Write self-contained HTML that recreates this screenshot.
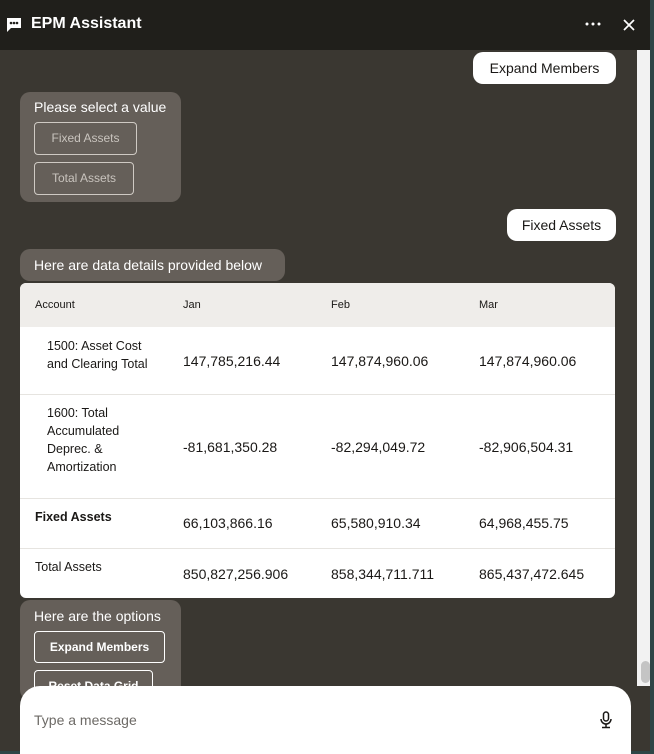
<!DOCTYPE html>
<html><head><meta charset="utf-8"><style>
*{box-sizing:border-box;margin:0;padding:0}
body{width:654px;height:754px;overflow:hidden;background:#3a3731;font-family:"Liberation Sans",sans-serif;position:relative}
.a{position:absolute}
.hdr{left:0;top:0;width:654px;height:50px;background:#201f1b}
.white{background:#fff;color:#1a1816;border-radius:10px;font-size:14px}
.bub{background:#655f59;border-radius:10px}
.btn{border:1px solid #cfcac4;border-radius:4px;font-size:12px;text-align:center;color:#c9c4be}
.t{font-size:14px;color:#1a1816}
.h{font-size:11px;color:#1a1816}
.ln{left:20px;width:595px;height:1px;background:#e6e4e0}
</style></head><body>
<div class="a hdr"></div>
<svg class="a" style="left:6px;top:17px" width="16" height="16" viewBox="0 0 16 16"><path d="M1 1h14v10H5l-4 4z" fill="#fff"/><circle cx="5" cy="6" r="1.3" fill="#201f1b"/><circle cx="8" cy="6" r="1.3" fill="#201f1b"/><circle cx="11" cy="6" r="1.3" fill="#201f1b"/></svg>
<div class="a" style="left:31px;top:15px;color:#fff;font-weight:bold;font-size:16px">EPM Assistant</div>
<svg class="a" style="left:585px;top:22px" width="16" height="4" viewBox="0 0 16 4"><circle cx="2" cy="2" r="1.5" fill="#fff"/><circle cx="8" cy="2" r="1.5" fill="#fff"/><circle cx="14" cy="2" r="1.5" fill="#fff"/></svg>
<svg class="a" style="left:623px;top:19px" width="12" height="12" viewBox="0 0 12 12"><path d="M1 1L11 11M11 1L1 11" stroke="#fff" stroke-width="1.7"/></svg>
<div class="a" style="left:637px;top:50px;width:13px;height:636px;background:#f2f2f2"></div>
<div class="a" style="left:641px;top:661px;width:9px;height:22px;background:#c4c4c4;border-radius:5px"></div>
<div class="a" style="left:650px;top:0;width:4px;height:754px;background:#2e4647"></div>
<div class="a" style="left:0;top:751px;width:654px;height:3px;background:#2e4647"></div>

<div class="a white" style="left:473px;top:52px;width:143px;height:32px;line-height:32px;text-align:center">Expand Members</div>
<div class="a bub" style="left:20px;top:92px;width:161px;height:110px"></div>
<div class="a" style="left:34px;top:99px;color:#fff;font-size:14px">Please select a value</div>
<div class="a btn" style="left:34px;top:122px;width:103px;height:33px;line-height:31px">Fixed Assets</div>
<div class="a btn" style="left:34px;top:162px;width:100px;height:33px;line-height:31px">Total Assets</div>
<div class="a white" style="left:507px;top:209px;width:109px;height:32px;line-height:32px;text-align:center">Fixed Assets</div>
<div class="a bub" style="left:20px;top:249px;width:265px;height:32px;line-height:32px;padding-left:14px;color:#fff;font-size:14px">Here are data details provided below</div>

<div class="a" style="left:20px;top:283px;width:595px;height:315px;background:#fff;border-radius:6px;overflow:hidden">
<div style="height:44px;background:#efedea"></div></div>
<div class="a h" style="left:35px;top:299px">Account</div>
<div class="a h" style="left:183px;top:299px">Jan</div>
<div class="a h" style="left:331px;top:299px">Feb</div>
<div class="a h" style="left:479px;top:299px">Mar</div>
<div class="a ln" style="top:394px"></div>
<div class="a ln" style="top:498px"></div>
<div class="a ln" style="top:548px"></div>
<div class="a" style="left:47px;top:337px;font-size:12.5px;line-height:18px;color:#1a1816">1500: Asset Cost<br>and Clearing Total</div>
<div class="a t" style="left:183px;top:353px">147,785,216.44</div>
<div class="a t" style="left:331px;top:353px">147,874,960.06</div>
<div class="a t" style="left:479px;top:353px">147,874,960.06</div>
<div class="a" style="left:47px;top:404px;font-size:12.5px;line-height:18px;color:#1a1816">1600: Total<br>Accumulated<br>Deprec. &amp;<br>Amortization</div>
<div class="a t" style="left:183px;top:439px">-81,681,350.28</div>
<div class="a t" style="left:331px;top:439px">-82,294,049.72</div>
<div class="a t" style="left:479px;top:439px">-82,906,504.31</div>
<div class="a" style="left:35px;top:510px;font-size:12.5px;font-weight:bold;color:#1a1816">Fixed Assets</div>
<div class="a t" style="left:183px;top:515px">66,103,866.16</div>
<div class="a t" style="left:331px;top:515px">65,580,910.34</div>
<div class="a t" style="left:479px;top:515px">64,968,455.75</div>
<div class="a" style="left:35px;top:560px;font-size:12.5px;color:#1a1816">Total Assets</div>
<div class="a t" style="left:183px;top:566px">850,827,256.906</div>
<div class="a t" style="left:331px;top:566px">858,344,711.711</div>
<div class="a t" style="left:479px;top:566px">865,437,472.645</div>

<div class="a bub" style="left:20px;top:600px;width:161px;height:100px"></div>
<div class="a" style="left:34px;top:608px;color:#fff;font-size:14px">Here are the options</div>
<div class="a btn" style="left:34px;top:631px;width:131px;height:32px;line-height:30px;color:#fff;border-color:#fff;font-weight:bold">Expand Members</div>
<div class="a btn" style="left:34px;top:670px;width:119px;height:32px;line-height:30px;color:#fff;border-color:#fff;font-weight:bold">Reset Data Grid</div>

<div class="a" style="left:20px;top:686px;width:611px;height:68px;background:#fff;border-radius:20px 20px 0 0"></div>
<div class="a" style="left:34px;top:712px;font-size:14px;color:#6d6a66">Type a message</div>
<svg class="a" style="left:599px;top:711px" width="14" height="18" viewBox="0 0 14 18"><rect x="4.5" y="1" width="5" height="9" rx="2.5" fill="none" stroke="#1a1816" stroke-width="1.5"/><path d="M2 8a5 5 0 0 0 10 0M7 13v3M3 16.5h8" fill="none" stroke="#1a1816" stroke-width="1.5"/></svg>
</body></html>
